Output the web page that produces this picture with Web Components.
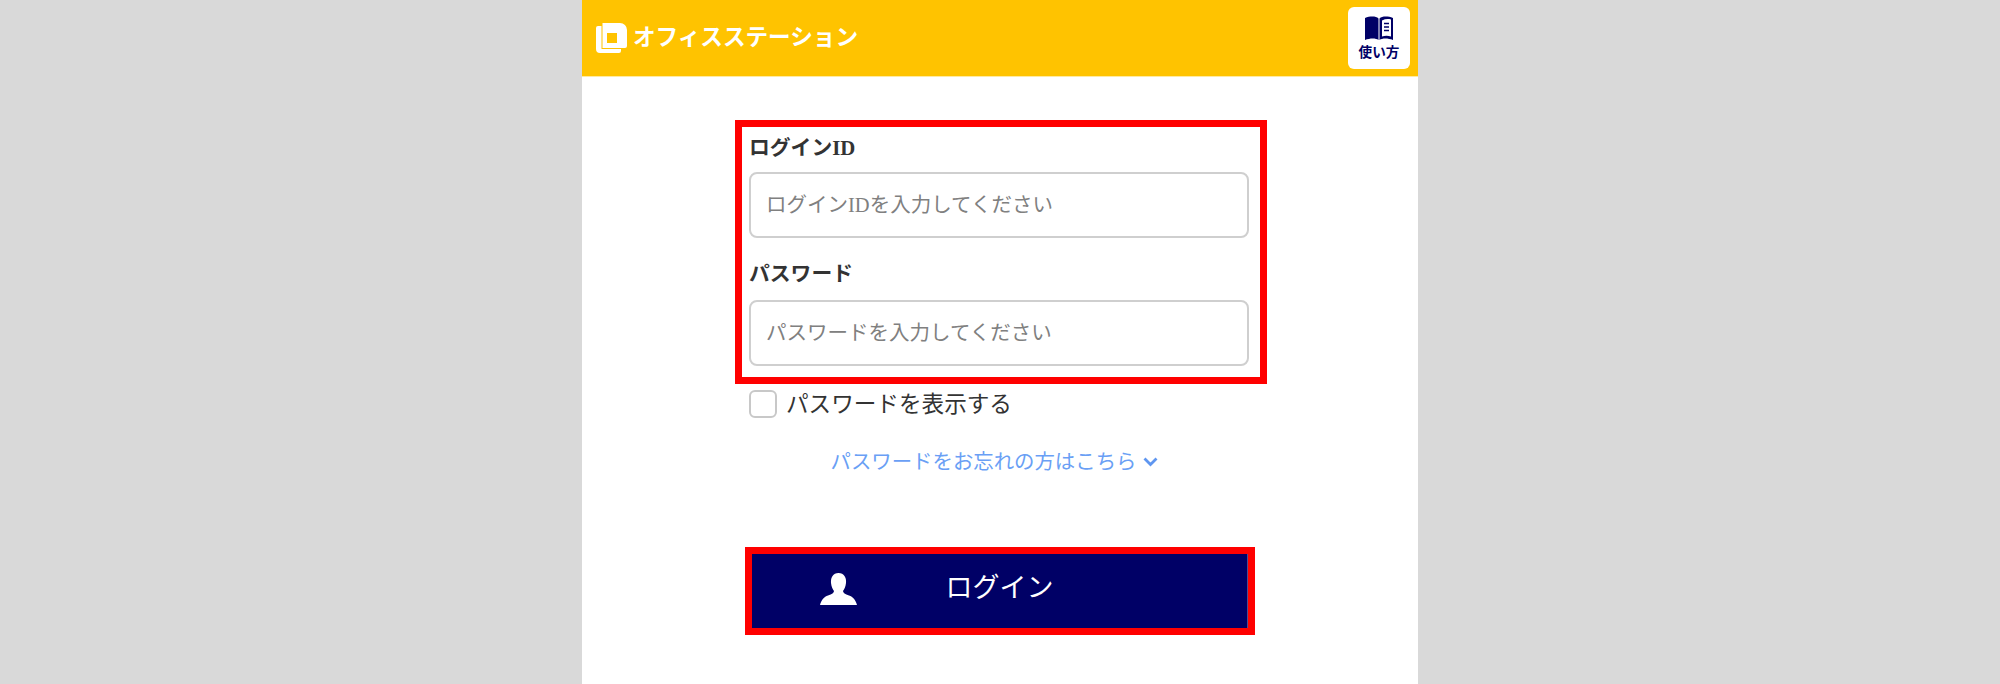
<!DOCTYPE html>
<html lang="ja">
<head>
<meta charset="utf-8">
<title>ログイン</title>
<style>
  html, body { margin: 0; height: 100%; }
  body {
    background: #d9d9d9;
    font-family: "Liberation Serif", "Noto Sans CJK JP", sans-serif;
    overflow: hidden;
  }
</style>
</head>
<body>
<os-page>
  <os-header></os-header>
  <os-highlight style="--w:518px;--pad:6px 0 11px;--top:43px;--left:153px">
    <os-field label="ログインID" placeholder="ログインIDを入力してください"></os-field>
    <os-field label="パスワード" placeholder="パスワードを入力してください" style="--label-top:21px;--gap:11px"></os-field>
  </os-highlight>
  <os-check>パスワードを表示する</os-check>
  <os-link>パスワードをお忘れの方はこちら</os-link>
  <os-highlight style="--w:496px;--pad:0;--top:71px;--left:163px">
    <os-button>ログイン</os-button>
  </os-highlight>
</os-page>

<script>
  /* page column */
  class OsPage extends HTMLElement {
    constructor() {
      super();
      this.attachShadow({mode: 'open'}).innerHTML = `
        <style>
          :host {
            display: flex;
            flex-direction: column;
            width: 836px;
            height: 684px;
            margin: 0 auto;
            background: #fff;
          }
        </style>
        <slot></slot>`;
    }
  }
  customElements.define('os-page', OsPage);

  /* yellow bar */
  class OsHeader extends HTMLElement {
    constructor() {
      super();
      this.attachShadow({mode: 'open'}).innerHTML = `
        <style>
          :host {
            display: flex;
            align-items: center;
            justify-content: space-between;
            height: 76px;
            padding: 0 8px 0 14px;
            border-bottom: 1px solid #ffeaa0;
            background: #ffc300;
          }
          .brand { display: flex; align-items: center; gap: 6px; }
          .name {
            padding-bottom: 3px;
            color: #fff;
            font: 700 22.6px/1 "Noto Sans CJK JP", sans-serif;
            white-space: nowrap;
          }
          .help {
            display: flex;
            flex-direction: column;
            align-items: center;
            box-sizing: border-box;
            width: 62px;
            height: 62px;
            padding-top: 9px;
            border-radius: 6px;
            background: #fff;
            color: #000066;
            font: 700 13.6px/16px "Noto Sans CJK JP", sans-serif;
          }
          .help svg { margin-bottom: 3px; }
        </style>
        <div class="brand">
          <svg width="31" height="30" viewBox="0 0 31 30">
            <path fill="#fff" fill-rule="evenodd" d="M6.500 0H24a7 7 0 0 1 7 7V23a2 2 0 0 1-2 2H6.500ZM11 10V20H21V10Z"/>
            <path fill="#fff" d="M0 5a2 2 0 0 1 2-2H5.500V26H25V28a2 2 0 0 1-2 2H4a4 4 0 0 1-4-4Z"/>
          </svg>
          <span class="name">オフィスステーション</span>
        </div>
        <div class="help">
          <svg width="28" height="24" viewBox="0 0 28 24">
            <path fill="#000066" d="M0 2C5 0 11 0 13.500 2.500V24C11 22 5 22 0 24Z"/>
            <path fill="#000066" fill-rule="evenodd" d="M14.500 2.500C17 0 23 0 28 2V24C23 22 17 22 14.500 24ZM17 4.500V20.500C20 19.500 23 19.500 26 20.500V3.500C23 2.800 20 3 17 4.500Z"/>
            <path stroke="#000066" stroke-width="1.500" d="M19 7.500h5M19 11h5M19 14.500h5"/>
          </svg>
          <span>使い方</span>
        </div>`;
    }
  }
  customElements.define('os-header', OsHeader);

  /* red annotation frame */
  class OsHighlight extends HTMLElement {
    constructor() {
      super();
      this.attachShadow({mode: 'open'}).innerHTML = `
        <style>
          :host {
            display: block;
            box-sizing: content-box;
            width: var(--w);
            margin: var(--top) 0 0 var(--left);
            border: 7px solid #ff0000;
            padding: var(--pad);
          }
        </style>
        <slot></slot>`;
    }
  }
  customElements.define('os-highlight', OsHighlight);

  class OsField extends HTMLElement {
    constructor() {
      super();
      this.attachShadow({mode: 'open'}).innerHTML = `
        <style>
          :host { display: block; padding: 0 11px 0 7px; }
          label {
            display: block;
            margin-top: var(--label-top, 0);
            margin-bottom: var(--gap, 9px);
            color: #333;
            font-size: 20.8px;
            font-weight: 700;
            line-height: 30px;
          }
          input {
            display: block;
            box-sizing: border-box;
            width: 100%;
            height: 66px;
            padding: 0 15px;
            border: 2px solid #cfcfcf;
            border-radius: 8px;
            background: #fff;
            font: 20.5px "Liberation Serif", "Noto Sans CJK JP", sans-serif;
            outline: none;
          }
          input::placeholder { color: #808080; opacity: 1; }
        </style>
        <label></label>
        <input type="text">`;
      this.shadowRoot.querySelector('label').textContent = this.getAttribute('label');
      this.shadowRoot.querySelector('input').placeholder = this.getAttribute('placeholder');
    }
  }
  customElements.define('os-field', OsField);

  class OsCheck extends HTMLElement {
    constructor() {
      super();
      this.attachShadow({mode: 'open'}).innerHTML = `
        <style>
          :host {
            display: flex;
            align-items: center;
            gap: 9px;
            margin: 5px 0 0 167px;
            color: #333;
            font-size: 22.6px;
            line-height: 28px;
          }
          input {
            appearance: none;
            box-sizing: border-box;
            width: 28px;
            height: 28px;
            margin: 0;
            border: 2px solid #c8c8c8;
            border-radius: 6px;
            background: #fff;
          }
          span { padding-top: 2px; }
        </style>
        <input type="checkbox">
        <span><slot></slot></span>`;
    }
  }
  customElements.define('os-check', OsCheck);

  class OsLink extends HTMLElement {
    constructor() {
      super();
      this.attachShadow({mode: 'open'}).innerHTML = `
        <style>
          :host {
            display: flex;
            align-items: center;
            justify-content: center;
            gap: 7px;
            margin-top: 29px;
            padding-right: 11px;
            color: #6a9ff5;
            font-size: 20.4px;
            line-height: 28px;
          }
        </style>
        <slot></slot>
        <svg width="15" height="10" viewBox="0 0 15 10">
          <path fill="none" stroke="#5f96f0" stroke-width="2.8" d="M1.500 1.500L7.500 7.500L13.500 1.500"/>
        </svg>`;
    }
  }
  customElements.define('os-link', OsLink);

  class OsButton extends HTMLElement {
    constructor() {
      super();
      this.attachShadow({mode: 'open'}).innerHTML = `
        <style>
          :host {
            display: block;
            position: relative;
            box-sizing: border-box;
            height: 74px;
            border-right: 1px solid #4d4d94;
            background: #000066;
            color: #fff;
            font-size: 27px;
            line-height: 68px;
            text-align: center;
          }
          svg { position: absolute; left: 68px; top: 19px; }
        </style>
        <svg width="37" height="32" viewBox="0 0 37 32">
          <path fill="#fff" d="M18.500 0C24 0 26.500 4.500 26 10C25.600 14 24 16.500 23 18C23 20 25 21 29 22.500C33 24 35.500 26.500 37 32H0C1.500 26.500 4 24 8 22.500C12 21 14 20 14 18C13 16.500 11.400 14 11 10C10.500 4.500 13 0 18.500 0Z"/>
        </svg>
        <slot></slot>`;
    }
  }
  customElements.define('os-button', OsButton);
</script>
</body>
</html>
